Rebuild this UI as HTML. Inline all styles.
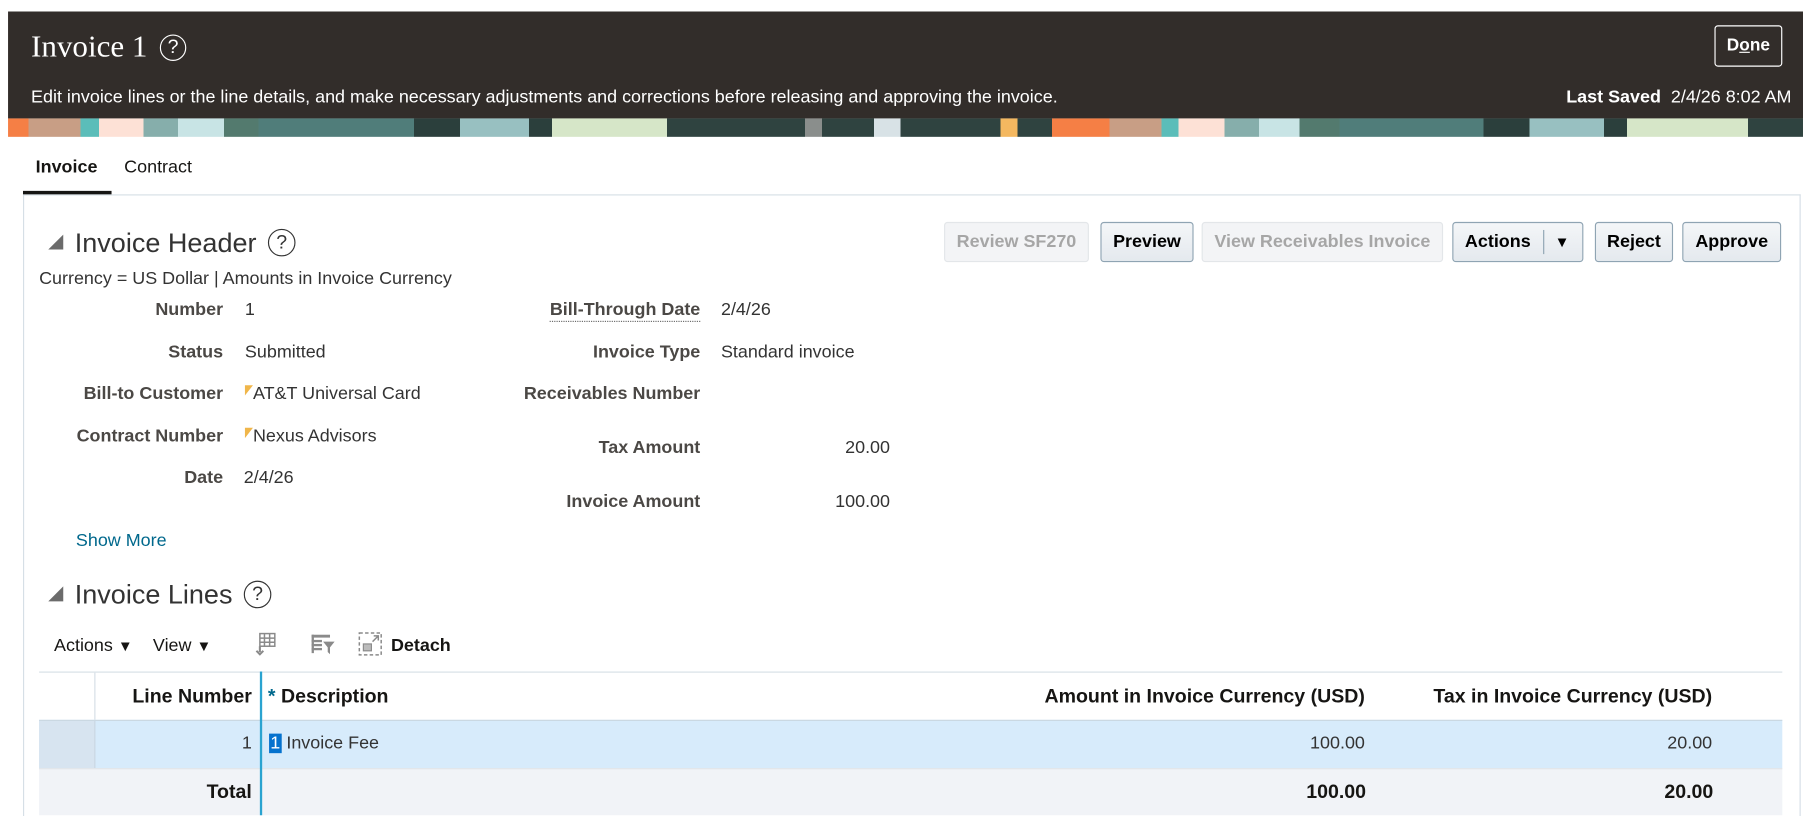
<!DOCTYPE html>
<html><head><meta charset="utf-8">
<style>
html,body{margin:0;padding:0;background:#fff;width:1803px;height:811px;overflow:hidden}
#w{position:absolute;left:0;top:0;width:1568px;height:705px;transform:scale(1.14987);transform-origin:0 0;font-family:"Liberation Sans",sans-serif;color:#161513}
.a{position:absolute;white-space:nowrap}
.dark{position:absolute;left:7px;top:10px;width:1561px;height:93px;background:#322d2a}
.banner{position:absolute;left:7px;top:103px;width:1561px;height:16px;background:linear-gradient(90deg,#f57f45 0,#f57f45 18px,#c89e85 18px,#c89e85 63px,#5bbdb9 63px,#5bbdb9 79px,#fde1d6 79px,#fde1d6 118px,#86aeab 118px,#86aeab 148px,#c8e4e5 148px,#c8e4e5 188px,#537a6e 188px,#537a6e 218px,#507d7a 218px,#507d7a 353px,#2b3f3c 353px,#2b3f3c 393px,#98c0c1 393px,#98c0c1 453px,#2b3f3c 453px,#2b3f3c 473px,#d6e6c8 473px,#d6e6c8 573px,#2f4340 573px,#2f4340 693px,#8a8e8c 693px,#8a8e8c 708px,#2f4340 708px,#2f4340 753px,#d8e2e6 753px,#d8e2e6 776px,#2f4340 776px,#2f4340 863px,#f4b860 863px,#f4b860 878px,#2f4340 878px,#2f4340 908px,#f57f45 908px,#f57f45 958px,#c89e85 958px,#c89e85 1003px,#5bbdb9 1003px,#5bbdb9 1018px,#fde1d6 1018px,#fde1d6 1058px,#86aeab 1058px,#86aeab 1088px,#c8e4e5 1088px,#c8e4e5 1123px,#537a6e 1123px,#537a6e 1158px,#507d7a 1158px,#507d7a 1283px,#2b3f3c 1283px,#2b3f3c 1323px,#98c0c1 1323px,#98c0c1 1388px,#2b3f3c 1388px,#2b3f3c 1408px,#d6e6c8 1408px,#d6e6c8 1513px,#2f4340 1513px)}
.lbl{font-weight:bold;color:#4b4845;font-size:15.6px;text-align:right}
.val{font-size:15.6px;color:#333}
.btn{position:absolute;top:193px;height:33px;border:1px solid #8fa4b3;border-radius:3px;background:linear-gradient(#f4f6f8,#e4e9ee);font-weight:bold;font-size:15.6px;line-height:33px;text-align:center;color:#000;box-sizing:content-box}
.dis{border-color:#e3e6e9;background:#f3f4f6;color:#a6a6a6}
.help{position:absolute;border:1.6px solid currentColor;border-radius:50%;text-align:center;box-sizing:border-box}
.tri{position:absolute;width:0;height:0;border-left:13px solid transparent;border-bottom:13px solid #6b6b6b}
.h{font-size:23.5px;color:#333}
.th{font-size:17px;font-weight:bold}
</style></head><body><div id="w">
<div class="dark"></div><div class="banner"></div>
<div class="a" style="left:27px;top:25px;font-family:'Liberation Serif',serif;font-size:27px;color:#fff">Invoice 1</div>
<div class="help" style="left:139px;top:30px;width:23px;height:23px;color:#fff;font-size:17px;line-height:20px">?</div>
<div class="a" style="left:27px;top:76px;font-size:15.6px;color:#fff">Edit invoice lines or the line details, and make necessary adjustments and corrections before releasing and approving the invoice.</div>
<div class="a" style="right:10px;top:76px;font-size:15.6px;color:#fff"><b>Last Saved</b>&nbsp; 2/4/26 8:02 AM</div>
<div class="a" style="left:1491px;top:22px;width:57px;height:34px;border:1.5px solid #fff;border-radius:3px;color:#fff;font-weight:bold;font-size:15px;line-height:34px;text-align:center">D<u>o</u>ne</div>

<div class="a" style="left:31px;top:137px;font-size:15.6px;font-weight:bold">Invoice</div>
<div class="a" style="left:108px;top:137px;font-size:15.6px">Contract</div>
<div class="a" style="left:20px;top:169px;width:1544px;height:540px;border:1px solid #d6dfe6;border-bottom:none"></div>
<div class="a" style="left:20px;top:166px;width:77px;height:3px;background:#161513"></div>

<div class="tri" style="left:42px;top:204px"></div>
<div class="a h" style="left:65px;top:198px">Invoice Header</div>
<div class="help" style="left:233px;top:199px;width:24px;height:24px;color:#333;font-size:17px;line-height:21px">?</div>
<div class="btn dis" style="left:821px;width:124px">Review SF270</div>
<div class="btn" style="left:957px;width:79px">Preview</div>
<div class="btn dis" style="left:1045px;width:208px">View Receivables Invoice</div>
<div class="btn" style="left:1263px;width:112px;text-align:left"><span style="padding-left:10px">Actions</span><span style="position:absolute;left:78px;top:6px;height:21px;border-left:1px solid #8fa4b3"></span><span style="position:absolute;left:88px;font-size:13px">▼</span></div>
<div class="btn" style="left:1387px;width:66px">Reject</div>
<div class="btn" style="left:1463px;width:84px">Approve</div>

<div class="a val" style="left:34px;top:234px;color:#333">Currency = US Dollar | Amounts in Invoice Currency</div>
<div class="a lbl" style="right:1374px;top:261px">Number</div><div class="a val" style="left:213px;top:261px">1</div>
<div class="a lbl" style="right:1374px;top:298px">Status</div><div class="a val" style="left:213px;top:298px">Submitted</div>
<div class="a lbl" style="right:1374px;top:334px">Bill-to Customer</div><div class="a val" style="left:213px;top:334px"><span style="display:inline-block;width:0;height:0;border-top:9px solid #f0b64a;border-right:7px solid transparent;vertical-align:top;margin-top:1px"></span>AT&amp;T Universal Card</div>
<div class="a lbl" style="right:1374px;top:371px">Contract Number</div><div class="a val" style="left:213px;top:371px"><span style="display:inline-block;width:0;height:0;border-top:9px solid #f0b64a;border-right:7px solid transparent;vertical-align:top;margin-top:1px"></span>Nexus Advisors</div>
<div class="a lbl" style="right:1374px;top:407px">Date</div><div class="a val" style="left:212px;top:407px">2/4/26</div>

<div class="a lbl" style="right:959px;top:261px;border-bottom:1px dotted #666">Bill-Through Date</div><div class="a val" style="left:627px;top:261px">2/4/26</div>
<div class="a lbl" style="right:959px;top:298px">Invoice Type</div><div class="a val" style="left:627px;top:298px">Standard invoice</div>
<div class="a lbl" style="right:959px;top:334px">Receivables Number</div>
<div class="a lbl" style="right:959px;top:381px">Tax Amount</div><div class="a val" style="right:794px;top:381px">20.00</div>
<div class="a lbl" style="right:959px;top:428px">Invoice Amount</div><div class="a val" style="right:794px;top:428px">100.00</div>
<div class="a" style="left:66px;top:462px;font-size:15.6px;color:#00688c">Show More</div>

<div class="tri" style="left:42px;top:510px"></div>
<div class="a h" style="left:65px;top:504px">Invoice Lines</div>
<div class="help" style="left:212px;top:505px;width:24px;height:24px;color:#333;font-size:17px;line-height:21px">?</div>

<div class="a" style="left:47px;top:553px;font-size:15.6px">Actions <span style="font-size:13px">▼</span></div>
<div class="a" style="left:133px;top:553px;font-size:15.6px">View <span style="font-size:13px">▼</span></div>
<svg class="a" style="left:219px;top:549px" width="24" height="24" viewBox="0 0 24 24" fill="none" stroke="#8a8a8a" stroke-width="1.3"><rect x="7" y="2" width="13" height="11"/><path d="M7 6h13M7 9.5h13M11 2v11M15.5 2v11"/><path d="M7 13v5M4 17l3 3 3-3" stroke-width="1.8"/></svg>
<svg class="a" style="left:269px;top:549px" width="24" height="24" viewBox="0 0 24 24" fill="#8a8a8a"><rect x="2" y="3" width="16" height="2.5"/><rect x="2" y="7.5" width="9" height="2"/><rect x="2" y="11" width="9" height="2"/><rect x="2" y="14.5" width="9" height="2"/><rect x="2" y="3" width="2" height="16"/><path d="M12 9h10l-4 5v6l-2-2v-4z"/></svg>
<svg class="a" style="left:311px;top:549px" width="22" height="22" viewBox="0 0 22 22" fill="none" stroke="#8a8a8a" stroke-width="1.3"><rect x="1.5" y="1.5" width="19" height="19" stroke-dasharray="3 2"/><rect x="5" y="11" width="7" height="6" fill="#bbb" stroke-width="1"/><path d="M13 9l5-5M14 4h4v4"/></svg>
<div class="a" style="left:340px;top:553px;font-size:15.6px;font-weight:bold">Detach</div>

<div class="a" style="left:34px;top:584px;width:1516px;height:1px;background:#d6dfe6"></div>
<div class="a" style="left:82px;top:585px;width:1px;height:41px;background:#d6dfe6"></div>
<div class="a" style="left:34px;top:626px;width:1516px;height:41px;background:#d7ebfb;border-top:1px solid #c9d7e2"></div>
<div class="a" style="left:34px;top:627px;width:48px;height:41px;background:#d7e4f0;border-right:1px solid #c9d7e2"></div>
<div class="a" style="left:34px;top:668px;width:1516px;height:40px;background:#f1f3f7;border-top:1px solid #e0e4e8"></div>
<div class="a" style="left:226px;top:584px;width:1.5px;height:125px;background:#2aa3d0"></div>
<div class="a th" style="right:1349px;top:596px">Line Number</div>
<div class="a th" style="left:233px;top:596px"><span style="color:#00688c">*</span> Description</div>
<div class="a th" style="right:381px;top:596px">Amount in Invoice Currency (USD)</div>
<div class="a th" style="right:79px;top:596px">Tax in Invoice Currency (USD)</div>
<div class="a val" style="right:1349px;top:638px">1</div>
<div class="a val" style="left:234px;top:638px"><span style="background:#0572ce;color:#fff;padding:0 1px">1</span> Invoice Fee</div>
<div class="a val" style="right:381px;top:638px">100.00</div>
<div class="a val" style="right:79px;top:638px">20.00</div>
<div class="a th" style="right:1349px;top:679px">Total</div>
<div class="a th" style="right:380px;top:679px">100.00</div>
<div class="a th" style="right:78px;top:679px">20.00</div>
</div></body></html>
